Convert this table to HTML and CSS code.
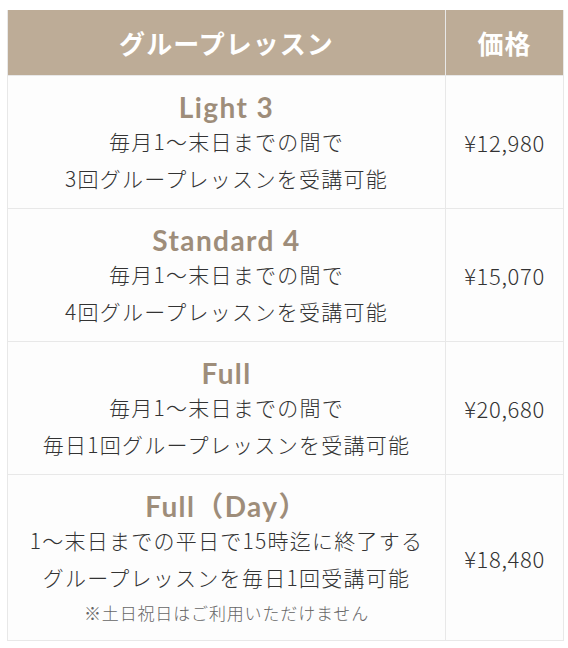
FILE: index.html
```html
<!DOCTYPE html>
<html lang="ja">
<head>
<meta charset="utf-8">
<link rel="stylesheet" href="styles.css">
</head>
<body>
<table class="plans">
  <thead>
    <tr>
      <th class="col-plan">グループレッスン</th>
      <th class="col-price">価格</th>
    </tr>
  </thead>
  <tbody>
    <tr>
      <td class="plan">
        <div class="name">Light 3</div>
        <div class="desc">毎月1〜末日までの間で<br>3回グループレッスンを受講可能</div>
      </td>
      <td class="price">¥12,980</td>
    </tr>
    <tr>
      <td class="plan">
        <div class="name">Standard 4</div>
        <div class="desc">毎月1〜末日までの間で<br>4回グループレッスンを受講可能</div>
      </td>
      <td class="price">¥15,070</td>
    </tr>
    <tr>
      <td class="plan">
        <div class="name">Full</div>
        <div class="desc">毎月1〜末日までの間で<br>毎日1回グループレッスンを受講可能</div>
      </td>
      <td class="price">¥20,680</td>
    </tr>
    <tr class="last">
      <td class="plan">
        <div class="name">Full（Day）</div>
        <div class="desc">1〜末日までの平日で15時迄に終了する<br>グループレッスンを毎日1回受講可能</div>
        <div class="note">※土日祝日はご利用いただけません</div>
      </td>
      <td class="price">¥18,480</td>
    </tr>
  </tbody>
</table>
</body>
</html>
```
FILE: styles.css
```css
html, body {
  margin: 0;
  padding: 0;
  background: #ffffff;
}
body {
  padding: 10px 7px 0 7px;
  font-family: "Noto Sans CJK JP", "Noto Sans", sans-serif;
  color: #333333;
}
.plans {
  width: 554px;
  border-collapse: collapse;
  table-layout: fixed;
  background: #fdfdfd;
}
.plans th {
  background: #bdac97;
  color: #ffffff;
  font-weight: 700;
  font-size: 26px;
  height: 65px;
  padding: 0;
  border: 1px solid #e8e8e8;
  border-top: none;
  letter-spacing: 0.04em;
}
.col-plan { width: 437px; }
.col-price { width: 117px; }
.plans td {
  border: 1px solid #e8e8e8;
  text-align: center;
  vertical-align: middle;
  padding: 0;
}
.plans tbody tr { height: 133px; }
.plans tbody tr.last { height: 166px; }
.name {
  font-family: "Lato", "Noto Sans CJK JP", sans-serif;
  font-weight: 700;
  font-size: 28px;
  letter-spacing: 0.05em;
  color: #9e8d7a;
  line-height: 32px;
  padding-top: 4px;
}
.desc {
  font-size: 21px;
  font-weight: 300;
  line-height: 37px;
  color: #333333;
  letter-spacing: 0.06em;
}
.note {
  font-size: 17px;
  font-weight: 300;
  line-height: 34px;
  color: #666666;
  letter-spacing: 0.05em;
}
.price {
  font-size: 22px;
  font-weight: 300;
  letter-spacing: 0.03em;
  color: #333333;
}
```
